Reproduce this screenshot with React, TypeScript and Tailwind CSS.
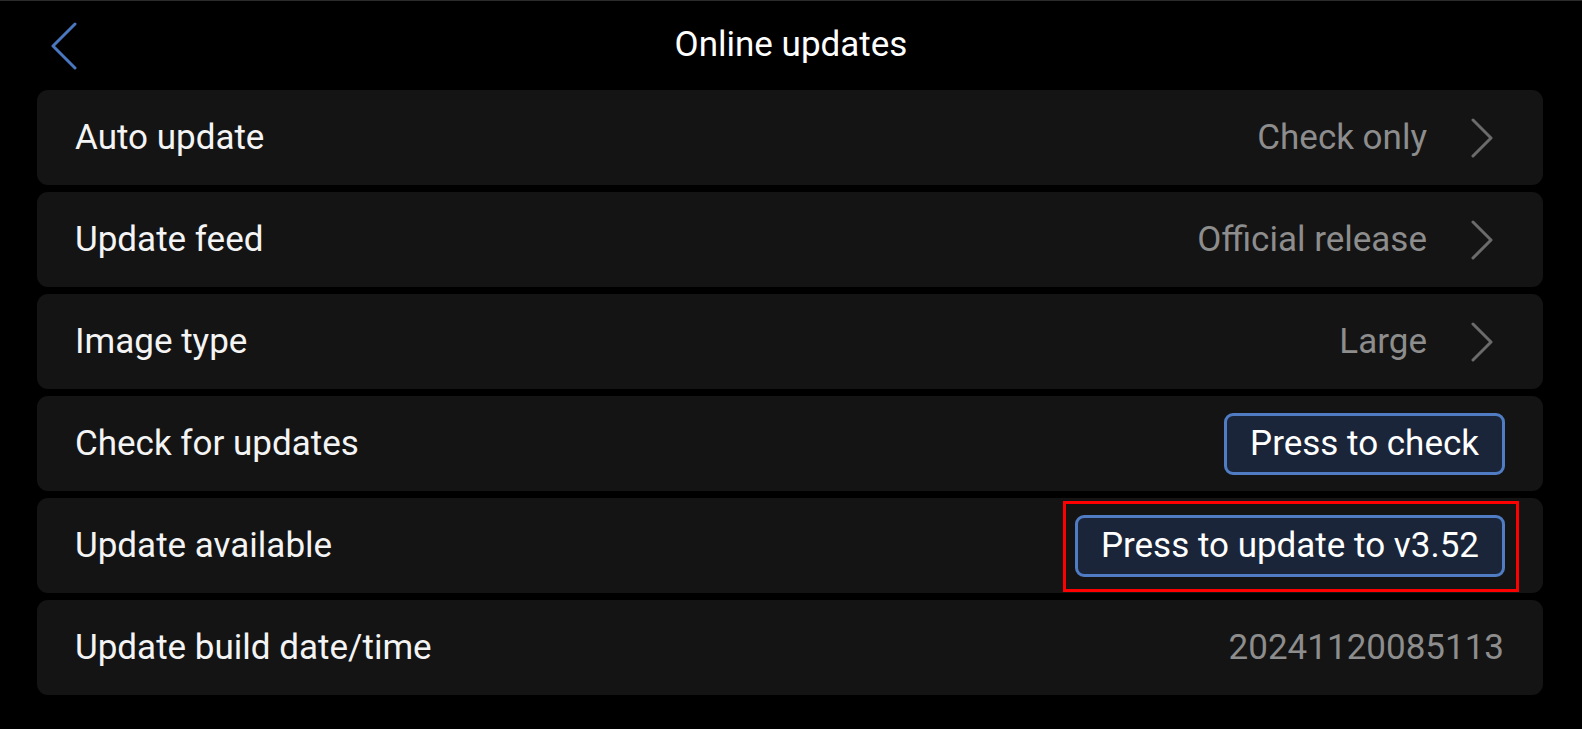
import React from 'react';

type Row = {
  label: string;
  value?: string;
  chevron?: boolean;
  button?: string;
  highlight?: boolean;
};

const rows: Row[] = [
  { label: 'Auto update', value: 'Check only', chevron: true },
  { label: 'Update feed', value: 'Official release', chevron: true },
  { label: 'Image type', value: 'Large', chevron: true },
  { label: 'Check for updates', button: 'Press to check' },
  { label: 'Update available', button: 'Press to update to v3.52', highlight: true },
  { label: 'Update build date/time', value: '20241120085113' },
];

function Chevron() {
  return (
    <svg width="22" height="40" viewBox="0 0 22 40" fill="none" className="ml-[44px]">
      <path d="M2 2 L20 20 L2 38" stroke="#6b6b6b" strokeWidth="3" strokeLinecap="round" strokeLinejoin="round" />
    </svg>
  );
}

export default function App() {
  return (
    <div
      className="w-[1582px] h-[729px] bg-black border-t border-[#2b2b2b] text-white overflow-hidden"
      style={{ fontFamily: 'Roboto, "Noto Sans", sans-serif' }}
    >
      <div className="relative h-[89px] flex items-center justify-center">
        <svg width="26" height="48" viewBox="0 0 26 48" fill="none" className="absolute left-[51px] top-[21px]">
          <path d="M24 2 L2 24 L24 46" stroke="#4a78c0" strokeWidth="3" strokeLinecap="round" strokeLinejoin="round" />
        </svg>
        <h1 className="text-[35px] leading-none -mt-[2px]">Online updates</h1>
      </div>

      <div className="flex flex-col gap-[7px] pl-[37px] pr-[39px]">
        {rows.map((row) => (
          <div
            key={row.label}
            className={`h-[95px] rounded-[11px] bg-[#141414] flex items-center pl-[38px] ${
              row.chevron ? 'pr-[50px]' : row.button ? 'pr-[38px]' : 'pr-[39px]'
            }`}
          >
            <span className="flex-1 text-[35px] leading-none text-[#f4f4f4]">{row.label}</span>
            {row.value && (
              <span className="text-[35px] leading-none text-[#8d8d8d]">{row.value}</span>
            )}
            {row.chevron && <Chevron />}
            {row.button && (
              <div className="relative">
                <button className="h-[62px] px-[23px] rounded-[9px] border-[3px] border-[#4f7cc2] bg-[#1b2539] text-[35px] leading-none text-white">
                  {row.button}
                </button>
                {row.highlight && (
                  <div className="absolute -left-[12px] -right-[14px] -top-[14px] -bottom-[15px] border-[3px] border-[#ff0000]" />
                )}
              </div>
            )}
          </div>
        ))}
      </div>
    </div>
  );
}
